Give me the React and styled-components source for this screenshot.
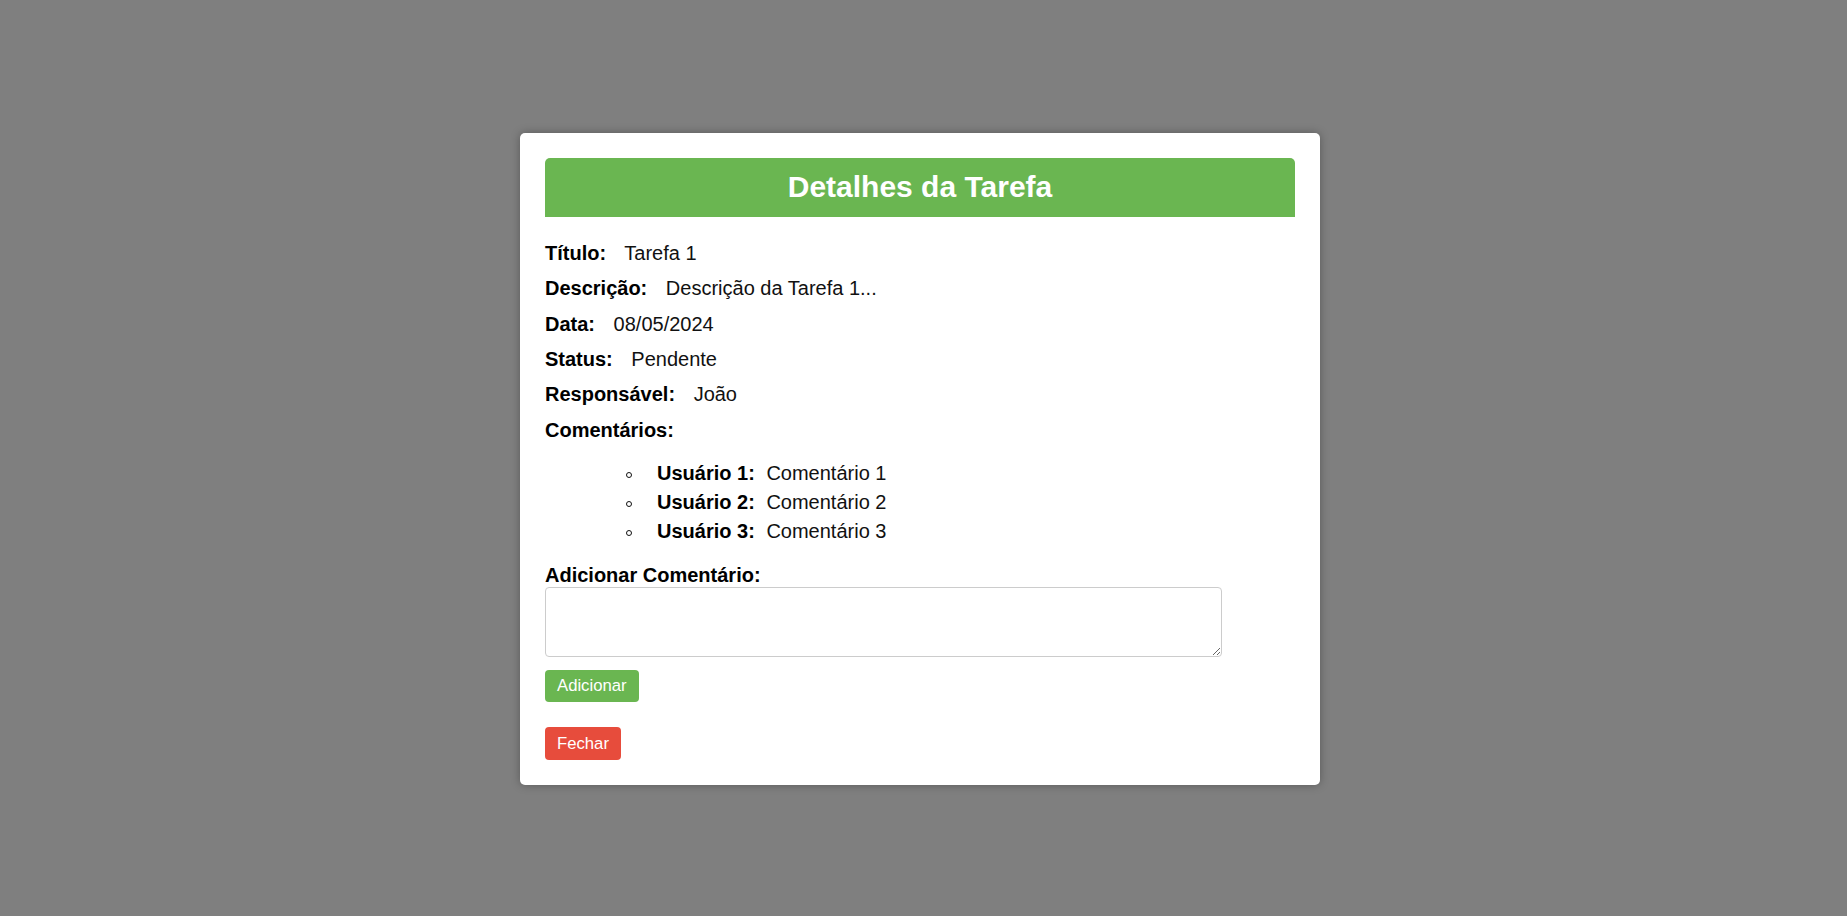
import React from "react";
import styled, { createGlobalStyle } from "styled-components";

const GlobalStyle = createGlobalStyle`
  html, body {
    margin: 0;
    padding: 0;
  }
  body {
    font-family: "Liberation Sans", Arial, sans-serif;
    background: #fff;
  }
`;

const Overlay = styled.div`
  min-height: 100vh;
  background: rgba(0, 0, 0, 0.5);
  display: flex;
  align-items: center;
  justify-content: center;
  padding: 2px 7px 0 0;
  box-sizing: border-box;
`;

const Modal = styled.div`
  width: 800px;
  box-sizing: border-box;
  background: #fff;
  border-radius: 5px;
  padding: 25px;
  box-shadow: 0 0 10px rgba(0, 0, 0, 0.3);
  display: flex;
  flex-direction: column;
  align-items: flex-start;
`;

const Header = styled.h2`
  align-self: stretch;
  margin: 0;
  height: 59px;
  display: flex;
  align-items: center;
  justify-content: center;
  background: #6ab651;
  color: #fff;
  font-size: 30px;
  font-weight: bold;
  border-radius: 5px 5px 0 0;
`;

const Info = styled.div`
  display: flex;
  flex-direction: column;
  gap: 13.4px;
  margin-top: 25px;
`;

const Row = styled.p`
  margin: 0;
  font-size: 20px;
  line-height: 22px;
  color: #111;
`;

const Label = styled.strong`
  color: #000;
  margin-right: ${(p) => p.gap || 13}px;
`;

const List = styled.ul`
  list-style: none;
  margin: 21px 0 0;
  padding-left: 112px;
`;

const Item = styled.li`
  font-size: 20px;
  line-height: 22px;
  color: #111;
  margin-bottom: 7.3px;
  &::before {
    content: "";
    display: inline-block;
    width: 4px;
    height: 4px;
    border: 1px solid #111;
    border-radius: 50%;
    margin-left: -31px;
    margin-right: 25px;
    vertical-align: 2px;
  }
  &:last-child {
    margin-bottom: 0;
  }
`;

const FieldLabel = styled.label`
  display: block;
  margin-top: 22px;
  font-size: 20px;
  line-height: 22px;
  font-weight: bold;
  color: #000;
`;

const TextArea = styled.textarea`
  display: block;
  margin-top: 1px;
  width: 677px;
  height: 70px;
  box-sizing: border-box;
  border: 1px solid #ccc;
  border-radius: 4px;
  font-family: inherit;
`;

const Button = styled.button`
  border: none;
  border-radius: 4px;
  color: #fff;
  font-family: "Liberation Sans", Arial, sans-serif;
  font-size: 16.7px;
  padding: 0 12px;
  height: ${(p) => p.h}px;
  margin-top: ${(p) => p.top}px;
  background: ${(p) => p.bg};
  cursor: pointer;
`;

const details = [
  ["Título:", "Tarefa 1"],
  ["Descrição:", "Descrição da Tarefa 1..."],
  ["Data:", "08/05/2024"],
  ["Status:", "Pendente"],
  ["Responsável:", "João"],
];

const comments = [
  ["Usuário 1:", "Comentário 1"],
  ["Usuário 2:", "Comentário 2"],
  ["Usuário 3:", "Comentário 3"],
];

export default function App() {
  return (
    <>
      <GlobalStyle />
      <Overlay>
        <Modal>
          <Header>Detalhes da Tarefa</Header>
          <Info>
            {details.map(([k, v]) => (
              <Row key={k}>
                <Label>{k}</Label> {v}
              </Row>
            ))}
            <Row>
              <Label>Comentários:</Label>
            </Row>
          </Info>
          <List>
            {comments.map(([u, c]) => (
              <Item key={u}>
                <Label gap={6}>{u}</Label> {c}
              </Item>
            ))}
          </List>
          <FieldLabel>Adicionar Comentário:</FieldLabel>
          <TextArea />
          <Button bg="#6ab651" h={32} top={13}>Adicionar</Button>
          <Button bg="#e74c3c" h={33} top={25}>Fechar</Button>
        </Modal>
      </Overlay>
    </>
  );
}
